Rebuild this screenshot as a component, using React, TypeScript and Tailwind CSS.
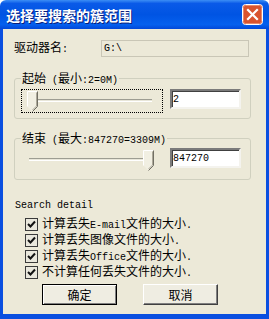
import React from 'react';

const M = ({ children }: { children: React.ReactNode }) => (
  <span className="font-['Liberation_Mono',monospace] text-[10px]">{children}</span>
);

function Thumb() {
  return (
    <svg width="11" height="21" viewBox="0 0 11 21" className="block">
      <polygon points="0.5,0.5 10.5,0.5 10.5,15.5 5.5,20.5 0.5,15.5" fill="#f1efe2" />
      <polyline points="0.5,15.5 0.5,0.5 10,0.5" fill="none" stroke="#ffffff" />
      <polyline points="10.5,0.5 10.5,15.5 5.5,20.5" fill="none" stroke="#716f64" />
      <polyline points="9.5,1.5 9.5,15 5.5,19" fill="none" stroke="#aca899" />
    </svg>
  );
}

function Track({ atEnd }: { atEnd?: boolean }) {
  return (
    <div className="relative h-[21px] w-[127px]">
      <div className="absolute left-[2px] right-[2px] top-[8px] h-[3px] border-t border-t-[#9d9d92] border-b border-b-white bg-[#e8e6d9]" />
      <div className={atEnd ? 'absolute right-0 top-0' : 'absolute left-0 top-0'}>
        <Thumb />
      </div>
    </div>
  );
}

function Check({ children }: { children: React.ReactNode }) {
  return (
    <div className="flex h-[16px] items-center pl-[11px]">
      <div className="flex h-[13px] w-[13px] items-center justify-center border border-[#3a3a3a] bg-[#e9e7dc]">
        <svg width="9" height="9" viewBox="0 0 9 9">
          <path d="M1 4 L3.5 6.5 L8 1.5" fill="none" stroke="#111" strokeWidth="2" />
        </svg>
      </div>
      <span className="ml-[4px] leading-[14px]">{children}</span>
    </div>
  );
}

function CloseIcon() {
  return (
    <svg width="21" height="21" viewBox="0 0 21 21" className="block">
      <rect x="0.5" y="0.5" width="20" height="20" rx="3" fill="#d9542f" stroke="#ffffff" />
      <rect x="1.5" y="1.5" width="18" height="18" rx="2" fill="none" stroke="#e98a6c" />
      <path d="M6 6 L15 15 M15 6 L6 15" stroke="#ffffff" strokeWidth="2.2" strokeLinecap="square" />
    </svg>
  );
}

export default function App() {
  return (
    <div className="w-[269px] h-[319px] flex flex-col overflow-hidden font-['Noto_Sans_CJK_SC',sans-serif] text-[12px] text-black">
      {/* title bar */}
      <div className="h-[29px] shrink-0 flex items-center justify-between pl-[6px] pr-[6px] rounded-t-[6px] bg-[linear-gradient(to_bottom,#3c8ef5_0%,#0a5ae8_12%,#0054e3_50%,#0560ee_85%,#0248d8_100%)]">
        <span className="text-[14px] font-bold text-white leading-[16px] [text-shadow:1px_1px_0_#0a1e7a]">选择要搜索的簇范围</span>
        <CloseIcon />
      </div>

      {/* body */}
      <div className="flex-1 border-l-[3px] border-r-[3px] border-b-[5px] border-[#0a4fe0] bg-[#ece9d8] pl-[11px] flex flex-col">
        <div className="mt-[11px] flex h-[17px] items-center">
          <span className="w-[87px] leading-[14px]">驱动器名<M>:</M></span>
          <div className="h-[17px] w-[148px] border border-[#c9c6b6] flex items-center pl-[2px] leading-[14px]">
            <M>G:\</M>
          </div>
        </div>

        {/* group 1 */}
        <div className="relative mt-[21px] h-[41px] w-[237px] rounded-[3px] border border-[#d0d0bf]">
          <span className="absolute left-[6px] -top-[8px] bg-[#ece9d8] px-[1px] leading-[14px]">
            起始<M> (</M>最小<M>:2=0M)</M>
          </span>
          <div className="flex items-start pl-[6px] pt-[10px]">
            <div className="h-[24px] w-[142px] border border-dotted border-black pl-[5px] pt-[1px]">
              <Track />
            </div>
            <div className="ml-[7px] h-[20px] w-[71px] border-2 border-t-[#7b7b7b] border-l-[#7b7b7b] border-b-[#f4f3ee] border-r-[#f4f3ee] bg-white shadow-[inset_1px_1px_0_#404040] flex items-center pl-[1px]">
              <M>2</M>
            </div>
          </div>
        </div>

        {/* group 2 */}
        <div className="relative mt-[19px] h-[42px] w-[237px] rounded-[3px] border border-[#d0d0bf]">
          <span className="absolute left-[6px] -top-[8px] bg-[#ece9d8] px-[1px] leading-[14px]">
            结束<M> (</M>最大<M>:847270=3309M)</M>
          </span>
          <div className="flex items-start pl-[7px] pt-[9px]">
            <div className="h-[24px] w-[142px] pl-[5px] pt-[2px]">
              <Track atEnd />
            </div>
            <div className="ml-[6px] h-[20px] w-[71px] border-2 border-t-[#7b7b7b] border-l-[#7b7b7b] border-b-[#f4f3ee] border-r-[#f4f3ee] bg-white shadow-[inset_1px_1px_0_#404040] flex items-center pl-[1px]">
              <M>847270</M>
            </div>
          </div>
        </div>

        <div className="mt-[16px] h-[14px] leading-[14px] pl-[1px]">
          <M>Search detail</M>
        </div>

        <div className="mt-[6px] flex flex-col">
          <Check>计算丢失<M>E-mail</M>文件的大小<M>.</M></Check>
          <Check>计算丢失图像文件的大小<M>.</M></Check>
          <Check>计算丢失<M>Office</M>文件的大小<M>.</M></Check>
          <Check>不计算任何丢失文件的大小<M>.</M></Check>
        </div>

        <div className="mt-[4px] flex pl-[28px] gap-[26px]">
          <button className="h-[21px] w-[75px] border border-black bg-[#efede2] shadow-[inset_1px_1px_0_#ffffff,inset_-1px_-1px_0_#808080] leading-[14px]">
            确定
          </button>
          <button className="h-[21px] w-[75px] border border-t-white border-l-white border-b-[#404040] border-r-[#404040] bg-[#efede2] shadow-[inset_-1px_-1px_0_#808080] leading-[14px]">
            取消
          </button>
        </div>
      </div>
    </div>
  );
}
